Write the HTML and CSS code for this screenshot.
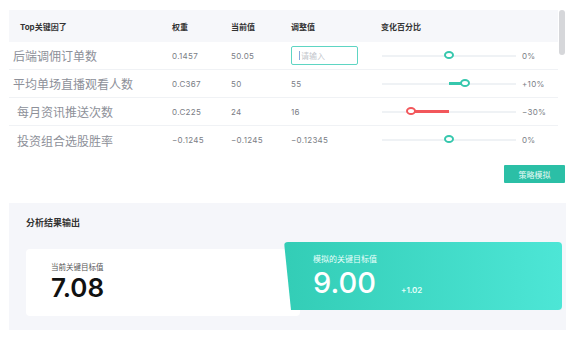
FILE: index.html
```html
<!DOCTYPE html>
<html lang="zh-CN">
<head>
  <meta charset="UTF-8">
  <title>关键因子模拟</title>
  <link rel="stylesheet" href="styles.css">
</head>
<body>
  <div class="page">
    <div class="tablewrap">
      <div class="factors">
        <div class="row head">
          <div class="cell name">Top关键因了</div>
          <div class="cell">权重</div>
          <div class="cell">当前值</div>
          <div class="cell">调整值</div>
          <div class="cell">变化百分比</div>
          <div class="cell"></div>
        </div>
        <div class="row">
          <div class="cell name">后端调佣订单数</div>
          <div class="cell num">0.1457</div>
          <div class="cell num">50.05</div>
          <div class="cell"><div class="input"><span class="caret"></span>请输入</div></div>
          <div class="cell"><div class="slider"><span class="thumb" style="left: 50%"></span></div></div>
          <div class="cell num">0%</div>
        </div>
        <div class="row">
          <div class="cell name">平均单场直播观看人数</div>
          <div class="cell num">0.C367</div>
          <div class="cell num">50</div>
          <div class="cell num">55</div>
          <div class="cell"><div class="slider"><span class="fill" style="left: 50%; width: 12%"></span><span class="thumb" style="left: 62%"></span></div></div>
          <div class="cell num">+10%</div>
        </div>
        <div class="row">
          <div class="cell name indent">每月资讯推送次数</div>
          <div class="cell num">0.C225</div>
          <div class="cell num">24</div>
          <div class="cell num">16</div>
          <div class="cell"><div class="slider"><span class="fill red" style="left: 22%; width: 28%"></span><span class="thumb red" style="left: 22%"></span></div></div>
          <div class="cell num">−30%</div>
        </div>
        <div class="row last">
          <div class="cell name indent">投资组合选股胜率</div>
          <div class="cell num">−0.1245</div>
          <div class="cell num">−0.1245</div>
          <div class="cell num">−0.12345</div>
          <div class="cell"><div class="slider"><span class="thumb" style="left: 50%"></span></div></div>
          <div class="cell num">0%</div>
        </div>
      </div>
      <div class="scrollbar"></div>
    </div>
    <div class="actions">
      <button class="btn">策略模拟</button>
    </div>
    <div class="result">
      <div class="result-title">分析结果输出</div>
      <div class="cards">
        <div class="card current">
          <div class="card-label">当前关键目标值</div>
          <div class="card-value">7.08</div>
        </div>
        <div class="card simulated">
          <div class="card-label">模拟的关键目标值</div>
          <div class="card-line">
            <span class="card-value">9.00</span>
            <span class="delta">+1.02</span>
          </div>
        </div>
      </div>
    </div>
  </div>
</body>
</html>
```

FILE: styles.css
```css
body {
  margin: 0;
  background: #fff;
  font-family: Inter, "Noto Sans CJK SC", sans-serif;
  color: #333;
}
.page {
  width: 576px;
  height: 338px;
  padding: 10px 10px 0 9px;
  box-sizing: border-box;
}

/* factor table */
.tablewrap {
  display: flex;
}
.factors {
  width: 549px;
}
.scrollbar {
  width: 6px;
  height: 45px;
  margin-left: 1px;
  background: #d6d7da;
  border-radius: 3px;
}
.row {
  display: grid;
  grid-template-columns: 163px 59px 60px 90px 141px 36px;
  height: 28px;
  align-items: center;
  border-bottom: 1px solid #f0f2f5;
  box-sizing: border-box;
}
.row.last {
  border-bottom: none;
}
.row.head {
  height: 32px;
  background: #f6f7fa;
  border-bottom: none;
  font-size: 8px;
  font-weight: 700;
  color: #333;
}
.cell {
  white-space: nowrap;
}
.cell.name {
  padding-left: 4px;
}
.row .cell.name {
  font-size: 12px;
  color: #8d9099;
}
.row.head .cell.name {
  padding-left: 11px;
  font-size: 8px;
  color: #333;
}
.cell.name.indent {
  padding-left: 8px;
}
.num {
  font-size: 8px;
  color: #7a7d85;
  letter-spacing: 0.3px;
}
.input {
  width: 67px;
  height: 19px;
  box-sizing: border-box;
  border: 1px solid #5ed5c3;
  border-radius: 2px;
  font-size: 8px;
  color: #c3c6cc;
  display: flex;
  align-items: center;
  padding-left: 7px;
}
.caret {
  width: 1px;
  height: 9px;
  background: #8ad;
  margin-right: 1px;
}

/* slider */
.slider {
  position: relative;
  width: 134px;
  height: 2px;
  margin-left: 1px;
  background: #eff2f5;
}
.fill {
  position: absolute;
  top: -1px;
  height: 3px;
  background: #36c7ad;
}
.fill.red {
  background: #f2575b;
}
.thumb {
  position: absolute;
  top: -4px;
  width: 10px;
  height: 8px;
  margin-left: -5px;
  box-sizing: border-box;
  border: 2px solid #36c7ad;
  border-radius: 50%;
  background: #fff;
}
.thumb.red {
  border-color: #f2575b;
}

.actions {
  display: flex;
  justify-content: flex-end;
  margin: 11px 1px 0 0;
}
.btn {
  width: 61px;
  height: 18px;
  border: none;
  border-radius: 1px;
  background: #2bbfa6;
  color: #e8fbf7;
  font-family: inherit;
  font-size: 8px;
  padding: 0;
}

/* result section */
.result {
  margin-top: 20px;
  height: 127px;
  background: #f5f6fa;
  padding: 13px 0 0 17px;
  box-sizing: border-box;
}
.result-title {
  font-size: 9px;
  font-weight: 700;
  color: #333;
}
.cards {
  display: flex;
  align-items: flex-start;
  margin-top: 13px;
}
.card {
  box-sizing: border-box;
  height: 68px;
}
.current {
  width: 274px;
  margin-top: 7px;
  height: 67px;
  background: #fff;
  border-radius: 4px;
  padding: 12px 0 0 25px;
}
.current .card-label {
  font-size: 7.5px;
  color: #555;
}
.current .card-value {
  font-size: 26px;
  font-weight: 600;
  color: #111;
  line-height: 30px;
  margin-top: 1px;
}
.simulated {
  width: 278px;
  margin-left: -16px;
  border-radius: 4px;
  background: linear-gradient(90deg, #33cdb6 0%, #4de6d6 100%);
  clip-path: polygon(0 0, 100% 0, 100% 100%, 7px 100%);
  box-shadow: 0 4px 12px rgba(80, 110, 200, 0.12);
  padding: 11px 0 0 29px;
  color: #fff;
}
.simulated .card-label {
  font-size: 8px;
  color: #eafffb;
}
.card-line {
  display: flex;
  align-items: baseline;
}
.simulated .card-value {
  font-size: 29px;
  font-weight: 500;
  line-height: 38px;
  width: 88px;
}
.delta {
  font-size: 8px;
  font-weight: 600;
  color: #e6fffa;
}
```
